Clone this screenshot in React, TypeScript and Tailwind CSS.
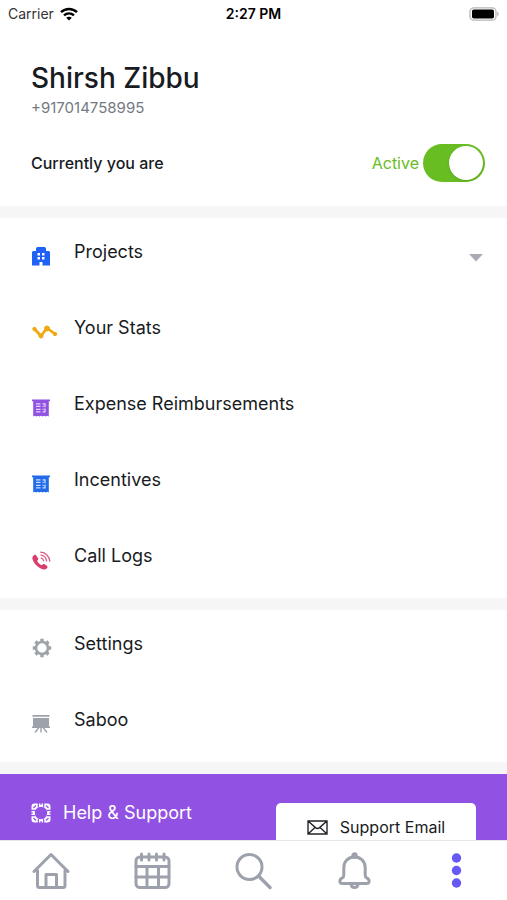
import React, { useState } from 'react';

const BuildingIcon = () => (
  <svg viewBox="0 0 18 20" className="w-[18px] h-5" fill="#1f62f5">
    <path
      fillRule="evenodd"
      d="M4 2.500 5 1h8l1 1.500V5h3l1 1v13.500h-7.500v-3.500h-3v3.500H0V6l1-1h3zM5.500 7v2.500H8V7zM10 7v2.500h2.500V7zM5.500 11v2.500H8V11zm4.500 0v2.500h2.500V11z"
    />
  </svg>
);

const StatsIcon = () => (
  <svg viewBox="0 0 26 16" className="w-[26px] h-4" fill="#f0a911" stroke="#f0a911">
    <path d="M2.500 5 9 12l6-8 8 6" fill="none" strokeWidth="2.800" strokeLinejoin="round" />
    <circle cx="2.500" cy="5" r="1.700" />
    <circle cx="9" cy="12" r="2" />
    <circle cx="15" cy="4.500" r="2.500" />
    <circle cx="23" cy="10" r="1.700" />
  </svg>
);

const ReceiptIcon = ({ color }: { color: string }) => (
  <svg viewBox="0 0 18 18" className="w-[18px] h-[18px]">
    <path d="M0 .5h18v1.800h-1.200v15.200l-1.500-.8-1.500.8-1.600-.8-1.600.8-1.600-.8-1.600.8-1.600-.8-1.600.8-1.500-.8-1.500.8V2.300H0z" fill={color} />
    <path d="M4 4.800h4.500M4 7.300h4.500M4 10.300h4.500M4 12.800h4.500M10.500 4.800h3M10.500 7.300h1.200M10.500 10.300h1.200M10.500 12.800h3M13 4.200v4M13 9.500v4" stroke="#fff" strokeWidth="1.300" opacity=".75" />
  </svg>
);

const CallIcon = () => (
  <svg viewBox="0 0 19 19" className="w-[19px] h-[19px]">
    <path
      d="M1.300 4.700C2 3.900 3.300 3.500 4 4.300l2.100 3c.4.700.1 1.300-.5 1.900-.6.600-.4 1.100.2 1.900.7 1 1.700 1.900 2.700 2.600.8.500 1.300.6 1.800 0 .6-.7 1.200-1 1.900-.6l2.900 2c.8.600.5 1.700-.4 2.500-1.300 1.200-3.200 1.300-5.400.2C5.500 15.900 2.500 12.900.9 9.200c-.8-1.900-.6-3.400.4-4.500z"
      fill="#d93d6b"
    />
    <g fill="none" stroke="#d93d6b" strokeWidth="1.200" strokeLinecap="round" opacity=".85">
      <path d="M9.200 7.100c1.300.4 2.200 1.300 2.500 2.700" />
      <path d="M9 4.200c3 .4 5.200 2.700 5.600 5.800" />
      <path d="M8.700 1.200c4.900.3 8.700 4.200 9.100 9.100" />
    </g>
  </svg>
);

const GearIcon = () => (
  <svg viewBox="0 0 20 20" className="w-5 h-5" stroke="#9da3aa" fill="none">
    <circle cx="10" cy="10" r="6" strokeWidth="2.600" />
    <path
      d="M10 .8v3M10 16.200v3M.8 10h3M16.200 10h3M3.500 3.500l2 2M14.500 14.500l2 2M16.500 3.500l-2 2M5.500 14.500l-2 2"
      strokeWidth="3.400"
    />
  </svg>
);

const BoardIcon = () => (
  <svg viewBox="0 0 18 20" className="w-[18px] h-5" fill="#9da3aa">
    <path d="M.5 1h17v1.800H.5zM1 4h16v8.500h1V14H0v-1.500h1z" />
    <path d="M9 13v5.500M7 13.500l-4 5M11 13.500l4 5" stroke="#9da3aa" strokeWidth="1.400" />
  </svg>
);

const HelpIcon = () => (
  <svg viewBox="0 0 20 20" className="w-5 h-5 shrink-0">
    <path
      fillRule="evenodd"
      d="M3.500.5h13a3 3 0 0 1 3 3v13a3 3 0 0 1-3 3h-13a3 3 0 0 1-3-3v-13a3 3 0 0 1 3-3zM10 3.800a6.200 6.200 0 1 0 0 12.400 6.200 6.200 0 0 0 0-12.400z"
      fill="#fff"
    />
    <path
      d="M7.300 0v4.500M12.700 0v4.500M7.300 15.500V20M12.700 15.500V20M0 7.300h4.500M0 12.700h4.500M15.500 7.300H20M15.500 12.700H20M10 0v2M10 18v2M0 10h2M18 10h2M2.500 5l2.500-2.500M15 2.500 17.500 5M2.500 15 5 17.500M15 17.500l2.500-2.500"
      stroke="#9152e3"
      strokeWidth="1.200"
    />
  </svg>
);

const MailIcon = () => (
  <svg viewBox="0 0 21 15" className="w-[21px] h-[15px] shrink-0" fill="none" stroke="#22252a" strokeWidth="1.400">
    <path d="M1 1h19v13H1zM1 1l7.500 6.600c1.200 1 2.800 1 4 0L20 1M1 14l7-6.500M20 14l-7-6.500" />
  </svg>
);

const WifiIcon = () => (
  <svg viewBox="0 0 18 14" className="w-[18px] h-[14px]" fill="none" stroke="#000" strokeWidth="2.400">
    <path d="M1 5.200c4.600-4.300 11.400-4.300 16 0M4 8.400c2.900-2.600 7.100-2.600 10 0" />
    <path d="M9 13.500 6.200 10.800c1.600-1.400 4-1.400 5.600 0z" fill="#000" stroke="none" />
  </svg>
);

const BatteryIcon = () => (
  <svg viewBox="0 0 31 14" className="w-[31px] h-[14px]">
    <rect x="2" y=".8" width="26" height="12.400" rx="3.800" fill="#fff" stroke="#b5b5b5" strokeWidth="1.300" />
    <rect x="4" y="2.500" width="22" height="9" rx="1.800" fill="#000" />
    <path d="M29.400 4.800c1.600.6 1.600 3.800 0 4.400z" fill="#aaa" />
  </svg>
);

const HomeIcon = () => (
  <>
    <path d="M2 19.500 19 2.500l17 17" />
    <path d="M5.500 18.500v15c0 1.300.8 2 2 2h23.500c1.200 0 2-.7 2-2v-15M14 35V22.500h10.500V35" />
  </>
);

const CalendarIcon = () => (
  <>
    <rect x="2" y="5" width="33" height="30.500" rx="4" />
    <path d="M2 14.500h33M2 25h33M13 14.500v21M24.500 14.500v21M7.500 2v6M15 2v6M22.500 2v6M30 2v6" />
  </>
);

const SearchIcon = () => (
  <>
    <circle cx="14.500" cy="15" r="12.500" />
    <path d="m24 24.500 11 11" strokeWidth="3.500" />
  </>
);

const BellIcon = () => (
  <>
    <path d="M18.500 5c-6.400 0-10.700 4.500-10.700 10.700v7.500c0 1.500-.5 2.300-1.800 2.900-3 1.300-2.700 5.400.5 5.400h24c3.200 0 3.500-4.100.5-5.400-1.300-.6-1.800-1.400-1.800-2.900v-7.500C29.200 9.500 24.900 5 18.500 5z" />
    <circle cx="18.500" cy="3.500" r="1.700" fill="#9ca1ab" />
    <path d="M15 32c.5 4.700 6.500 4.700 7 0" />
  </>
);

const MoreIcon = () => (
  <g fill="#6759f5" stroke="none">
    <circle cx="18.500" cy="6" r="4.700" />
    <circle cx="18.500" cy="18.500" r="4.700" />
    <circle cx="18.500" cy="31" r="4.700" />
  </g>
);

const mainItems = [
  { label: 'Projects', icon: <BuildingIcon />, expandable: true },
  { label: 'Your Stats', icon: <StatsIcon /> },
  { label: 'Expense Reimbursements', icon: <ReceiptIcon color="#9152e3" /> },
  { label: 'Incentives', icon: <ReceiptIcon color="#1f6bea" /> },
  { label: 'Call Logs', icon: <CallIcon /> },
];

const otherItems = [
  { label: 'Settings', icon: <GearIcon /> },
  { label: 'Saboo', icon: <BoardIcon /> },
];

const tabs = [
  { label: 'Home', icon: <HomeIcon /> },
  { label: 'Calendar', icon: <CalendarIcon /> },
  { label: 'Search', icon: <SearchIcon /> },
  { label: 'Notifications', icon: <BellIcon /> },
  { label: 'More', icon: <MoreIcon /> },
];

type Item = { label: string; icon: React.ReactNode; expandable?: boolean };

const MenuRow: React.FC<Item> = ({ label, icon, expandable }) => (
  <button type="button" className="flex h-[76px] w-full items-start pl-8 pr-6 pt-5 text-left">
    <span className="flex h-9 w-[42px] items-center">{icon}</span>
    <span className="flex-1 text-lg leading-7">{label}</span>
    {expandable && (
      <svg viewBox="0 0 14 8" className="mt-4 h-2 w-[14px]" fill="#a9adb3">
        <path d="M0 0h14L7 7.500z" />
      </svg>
    )}
  </button>
);

const App: React.FC = () => {
  const [active, setActive] = useState(true);

  return (
    <div className="flex h-screen flex-col bg-white font-['Inter',sans-serif] text-[#181b22]">
      <div className="grid h-7 shrink-0 grid-cols-3 items-center px-2 text-sm text-black">
        <div className="flex items-center gap-1.5 text-[#333]">
          <span>Carrier</span>
          <WifiIcon />
        </div>
        <span className="text-center font-semibold">2:27 PM</span>
        <div className="flex justify-end">
          <BatteryIcon />
        </div>
      </div>

      <main className="min-h-0 flex-1 overflow-y-auto [scrollbar-width:none]">
        <header className="h-[178px] pl-[31px] pr-[22px] pt-8">
          <h1 className="text-[28px] font-medium leading-9">Shirsh Zibbu</h1>
          <p className="text-[15px] leading-6 text-[#737982]">+917014758995</p>
          <div className="mt-6 flex items-center justify-between">
            <span className="text-base font-medium">Currently you are</span>
            <label className="flex items-center gap-1 text-base text-[#68bd22]">
              Active
              <input
                type="checkbox"
                checked={active}
                onChange={(e) => setActive(e.target.checked)}
                className="h-[38px] w-[62px] cursor-pointer appearance-none rounded-full bg-gray-300 p-0.5 transition before:block before:h-[34px] before:w-[34px] before:rounded-full before:bg-white before:shadow before:content-[''] checked:bg-[#68bd22] checked:before:translate-x-6"
              />
            </label>
          </div>
        </header>

        <section className="border-t-12 border-[#f6f6f7]">
          {mainItems.map((item) => (
            <MenuRow key={item.label} {...item} />
          ))}
        </section>

        <section className="border-y-12 border-[#f6f6f7]">
          {otherItems.map((item) => (
            <MenuRow key={item.label} {...item} />
          ))}
        </section>

        <section className="flex items-start justify-between bg-[#9152e3] pb-8 pl-[31px] pr-[31px] pt-[29px]">
          <div className="flex items-center gap-3 text-lg leading-5 text-white">
            <HelpIcon />
            <h2>Help &amp; Support</h2>
          </div>
          <a
            href="mailto:"
            className="flex h-12 w-[200px] items-center justify-center gap-3 rounded-[5px] bg-white text-base"
          >
            <MailIcon />
            Support Email
          </a>
        </section>
      </main>

      <nav className="grid h-[60px] shrink-0 grid-cols-5 border-t border-gray-200 bg-white">
        {tabs.map((tab) => (
          <button key={tab.label} type="button" aria-label={tab.label} className="flex items-center justify-center">
            <svg
              viewBox="0 0 37 37"
              className="h-[37px] w-[37px] overflow-visible"
              fill="none"
              stroke="#9ca1ab"
              strokeWidth="3"
              strokeLinecap="round"
              strokeLinejoin="round"
            >
              {tab.icon}
            </svg>
          </button>
        ))}
      </nav>
    </div>
  );
};

export default App;
